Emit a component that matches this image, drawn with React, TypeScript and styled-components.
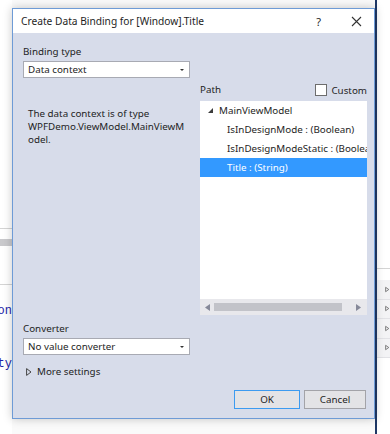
import styled, { createGlobalStyle } from "styled-components";

const GlobalStyle = createGlobalStyle`
  html, body {
    margin: 0;
    padding: 0;
    background: #ffffff;
  }
  * {
    box-sizing: border-box;
  }
`;

const treeItems = [
  { label: "IsInDesignMode : (Boolean)", selected: false },
  { label: "IsInDesignModeStatic : (Boolean)", selected: false },
  { label: "Title : (String)", selected: true },
];

export default function App() {
  return (
    <Screen>
      <GlobalStyle />
      <Backdrop>
        <LeftPane>
          <Blank $h={228} />
          <Rule />
          <Blank $h={10} />
          <GreyBar />
          <Blank $h={38} />
          <Rule />
          <CodeLine $top={19}>on</CodeLine>
          <CodeLine $top={39}>ty</CodeLine>
        </LeftPane>
        <Middle />
        <EdgeLine />
        <RightPane>
          <Blank $h={268} />
          <Rule />
          <Blank $h={11} />
          {[0, 1, 2, 3].map((i) => (
            <ExpandRow key={i}>
              <svg width="8" height="9" viewBox="0 0 8 9">
                <path d="M1 1 L6 4.5 L1 8 Z" fill="none" stroke="#5a5a5a" strokeWidth="1.2" />
              </svg>
            </ExpandRow>
          ))}
        </RightPane>
      </Backdrop>

      <Dialog>
        <TitleBar>
          <TitleText>Create Data Binding for [Window].Title</TitleText>
          <TitleButtons>
            <HelpGlyph>?</HelpGlyph>
            <svg width="11" height="11" viewBox="0 0 11 11">
              <path d="M1 1 L10 10 M10 1 L1 10" stroke="#333" strokeWidth="1.1" />
            </svg>
          </TitleButtons>
        </TitleBar>

        <Body>
          <Label>Binding type</Label>
          <Combo>
            <span>Data context</span>
            <ComboArrow />
          </Combo>

          <MainArea>
            <span />
            <PathHeader>
              <Label>Path</Label>
              <CheckRow>
                <CheckBox />
                <span>Custom</span>
              </CheckRow>
            </PathHeader>

            <Description>
              The data context is of type WPFDemo.ViewModel.MainViewModel.
            </Description>
            <TreeBox>
              <TreeList>
                <TreeRow $indent={8}>
                  <svg width="5" height="5" viewBox="0 0 5 5">
                    <path d="M5 0 L5 5 L0 5 Z" fill="#3c3c3c" />
                  </svg>
                  <span>MainViewModel</span>
                </TreeRow>
                {treeItems.map((item) => (
                  <TreeRow key={item.label} $indent={27} $selected={item.selected}>
                    <span>{item.label}</span>
                  </TreeRow>
                ))}
              </TreeList>
              <HScroll>
                <svg width="5" height="7" viewBox="0 0 5 7">
                  <path d="M5 0 L0 3.5 L5 7 Z" fill="#868999" />
                </svg>
                <Thumb />
                <svg width="5" height="7" viewBox="0 0 5 7">
                  <path d="M0 0 L5 3.5 L0 7 Z" fill="#868999" />
                </svg>
              </HScroll>
            </TreeBox>
          </MainArea>

          <Label $mt={6}>Converter</Label>
          <Combo>
            <span>No value converter</span>
            <ComboArrow />
          </Combo>

          <MoreSettings>
            <svg width="6" height="8" viewBox="0 0 6 8">
              <path d="M0.6 0.6 L5 4 L0.6 7.4 Z" fill="none" stroke="#444" strokeWidth="1" />
            </svg>
            <span>More settings</span>
          </MoreSettings>

          <Footer>
            <Button $primary $w={66}>OK</Button>
            <Button $w={62}>Cancel</Button>
          </Footer>
        </Body>
      </Dialog>
    </Screen>
  );
}

const Screen = styled.div`
  position: relative;
  width: 390px;
  height: 434px;
  overflow: hidden;
  background: #fbfbfb;
  font-family: "Segoe UI", "Noto Sans", "Open Sans", sans-serif;
  font-size: 9.8px;
  color: #1e1e1e;
`;

const Backdrop = styled.div`
  display: flex;
  height: 100%;
`;

const LeftPane = styled.div`
  width: 12px;
  display: flex;
  flex-direction: column;
  background: #ffffff;
  overflow: hidden;
`;

const Middle = styled.div`
  flex: 1;
  background: #fafafa;
`;

const EdgeLine = styled.div`
  width: 2px;
  background: #1f3866;
`;

const RightPane = styled.div`
  width: 13px;
  display: flex;
  flex-direction: column;
  background: #ffffff;
  overflow: hidden;
`;

const Blank = styled.div<{ $h: number }>`
  height: ${(p) => p.$h}px;
  flex-shrink: 0;
`;

const Rule = styled.div`
  height: 1px;
  flex-shrink: 0;
  background: #d4d4d4;
`;

const GreyBar = styled.div`
  height: 7px;
  flex-shrink: 0;
  background: #c9c9cc;
`;

const CodeLine = styled.div<{ $top: number }>`
  margin-top: ${(p) => p.$top}px;
  font-family: "Liberation Mono", monospace;
  font-size: 12px;
  line-height: 14px;
  color: #2323a8;
  white-space: nowrap;
  display: flex;
  justify-content: flex-end;
`;

const ExpandRow = styled.div`
  height: 19.5px;
  flex-shrink: 0;
  display: flex;
  align-items: center;
  padding-left: 8px;
  background: #f3f3f5;
  border-bottom: 1px solid #e2e2e6;
`;

const Dialog = styled.div`
  position: absolute;
  left: 12px;
  top: 8px;
  width: 363px;
  height: 411px;
  display: flex;
  flex-direction: column;
  border: 1px solid #6e9bd6;
  background: #d7dcea;
  box-shadow: 0 0 9px rgba(0, 0, 0, 0.22);
`;

const TitleBar = styled.div`
  height: 24px;
  display: flex;
  align-items: center;
  justify-content: space-between;
  padding: 0 12px 0 8px;
  background: #ffffff;
`;

const TitleText = styled.span`
  font-size: 10.2px;
`;

const TitleButtons = styled.div`
  display: flex;
  align-items: center;
  gap: 30px;
`;

const HelpGlyph = styled.span`
  font-size: 11px;
`;

const Body = styled.div`
  flex: 1;
  display: flex;
  flex-direction: column;
  align-items: flex-start;
  padding: 11px 7px 9px 10px;
`;

const Label = styled.div<{ $mt?: number }>`
  margin-top: ${(p) => p.$mt ?? 0}px;
  line-height: 16px;
`;

const Combo = styled.div`
  margin-top: 1px;
  width: 167px;
  height: 17px;
  display: flex;
  align-items: center;
  justify-content: space-between;
  padding: 0 5px 0 4px;
  background: #ffffff;
  border: 1px solid #a8aab3;
`;

const ComboArrow = styled.span`
  width: 0;
  height: 0;
  border-left: 2px solid transparent;
  border-right: 2px solid transparent;
  border-top: 2px solid #333;
`;

const MainArea = styled.div`
  margin-top: 5px;
  width: 344px;
  display: grid;
  grid-template-columns: 167px 167px;
  grid-template-rows: 14px 214px;
  column-gap: 10px;
  row-gap: 4px;
`;

const PathHeader = styled.div`
  display: flex;
  align-items: center;
  justify-content: space-between;
`;

const CheckRow = styled.div`
  display: flex;
  align-items: center;
  gap: 4px;
`;

const CheckBox = styled.span`
  width: 12px;
  height: 12px;
  background: #ffffff;
  border: 1px solid #6d6d6d;
`;

const Description = styled.div`
  padding: 6px 1px 0 5px;
  line-height: 13px;
  overflow-wrap: anywhere;
`;

const TreeBox = styled.div`
  display: flex;
  flex-direction: column;
  background: #ffffff;
`;

const TreeList = styled.div`
  flex: 1;
  overflow: hidden;
`;

const TreeRow = styled.div<{ $indent: number; $selected?: boolean }>`
  height: 19px;
  display: flex;
  align-items: center;
  gap: 6px;
  padding-left: ${(p) => p.$indent}px;
  white-space: nowrap;
  background: ${(p) => (p.$selected ? "#3399ff" : "transparent")};
  color: ${(p) => (p.$selected ? "#ffffff" : "#1e1e1e")};
`;

const HScroll = styled.div`
  height: 16px;
  display: flex;
  align-items: center;
  gap: 4px;
  padding: 0 6px 0 5px;
  background: #e8e8ec;
`;

const Thumb = styled.div`
  flex: 1;
  height: 8px;
  margin-right: 10px;
  background: #c2c3c9;
`;

const MoreSettings = styled.div`
  margin-top: 9px;
  display: flex;
  align-items: center;
  gap: 5px;
  padding-left: 3px;
  line-height: 16px;
`;

const Footer = styled.div`
  margin-top: auto;
  align-self: stretch;
  display: flex;
  justify-content: flex-end;
  gap: 4px;
  padding-right: 1px;
`;

const Button = styled.button<{ $primary?: boolean; $w: number }>`
  width: ${(p) => p.$w}px;
  height: 19px;
  padding: 0;
  font-family: inherit;
  font-size: 9.8px;
  color: #1e1e1e;
  background: #e3e3e6;
  border: 1px solid ${(p) => (p.$primary ? "#3d9bf0" : "#a3a3a8")};
`;
